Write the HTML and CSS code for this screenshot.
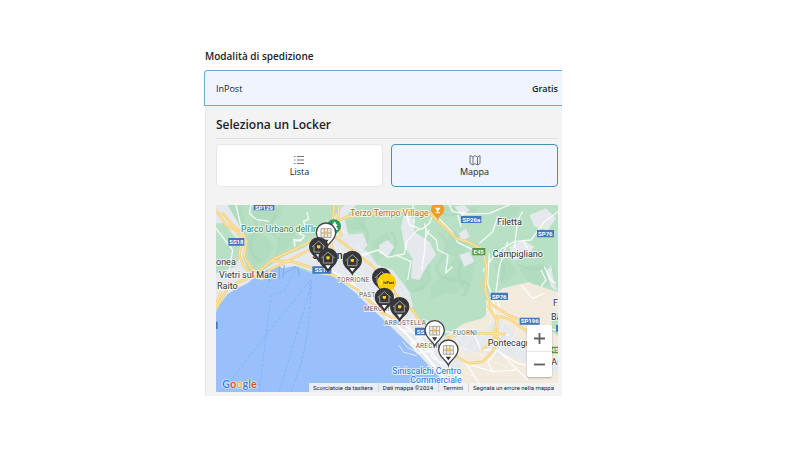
FILE: index.html
```html
<!DOCTYPE html>
<html lang="it">
<head>
<meta charset="utf-8">
<meta name="viewport" content="width=device-width, initial-scale=1">
<title>Modalità di spedizione</title>
<link rel="stylesheet" href="styles.css">
</head>
<body>
<main class="checkout">
  <h2 class="section-title">Modalità di spedizione</h2>
  <div class="method">
    <span>InPost</span>
    <strong class="price">Gratis</strong>
  </div>
  <section class="locker">
    <h1 class="locker-title">Seleziona un Locker</h1>
    <div class="modes">
      <button type="button" class="mode">
        <svg class="mode-icon" viewBox="0 0 12 12" aria-hidden="true"><path d="M3 2.500h7M3 6h7M3 9.500h7M0 2.500h1.500M0 6h1.500M0 9.500h1.500"/></svg>
        Lista
      </button>
      <button type="button" class="mode mode-active">
        <svg class="mode-icon" viewBox="0 0 12 12" aria-hidden="true"><path d="M1 1.500l3 1.500 2-1.500 2.500 1.500 2.500-1.500v8l-2.500 1.500-2.500-1.500-2 1.500-3-1.500zM4 3v8M8.500 3v8"/></svg>
        Mappa
      </button>
    </div>
    <div class="map">
      <svg class="map-canvas" viewBox="0 0 1026 561" preserveAspectRatio="xMidYMid slice" role="img" aria-label="Mappa dei locker">
        <defs>
          <path id="pin" d="M0 46C-4 31-29 22-29-1A29 29 0 0 1 29-1C29 22 4 31 0 46z"/>
          <g id="house">
            <use href="#pin" fill="#36373a"/>
            <path d="M-20 0L0-18 20 0M-14-4V15H14V-4" fill="none" stroke="#a39f98" stroke-width="3"/>
            <path d="M-5-5H5V2L0 5-5 2z" fill="#ffc926"/>
            <path d="M-8 22H8L0 33z" fill="#fff"/>
          </g>
          <g id="locker">
            <use href="#pin" fill="#fff" stroke="#45464a" stroke-width="4"/>
            <path d="M-15-13H15V13H-15zM-15 0H15M-5-13V13M5-13V13" fill="#f2efe9" stroke="#aaa398" stroke-width="3"/>
            <path d="M-5-5H5V4H-5z" fill="#f4c443"/>
            <path d="M-8 20H8L0 31z" fill="#333"/>
          </g>
        </defs>
        <rect class="land" width="1026" height="561"/>

        <!-- hills -->
        <g class="relief">
          <path d="M115 20l85-20-5 40-55 25zM85 95l50-15 40 45-30 45-45-10zM190 85l55-15-20 50-50 35zM390 50l65-25-10 50-50 5zM465 115l50-35 15 55-50 35zM555 55l45-30-5 60-40 25zM565 205l50-50 30 25-20 75-50 10zM645 240l60-50 45 45-50 55-55-5zM700 65l55 45-20 60-40-25zM640 5h150l-45 20-70-10zM830 180l45-15 30 35-40 40zM910 195l60-20 50 15-10 50-60 10z"/>
          <path d="M20 0l55 0 20 75-40-10zM95 150l40 20-20 20zM610 300l60-35 70 15-30 50-80 20zM735 10l60-10-25 35zM850 5h65l-20 45-40 5zM690 190l45-55 45 35-20 80z"/>
        </g>
        <g class="relief-line">
          <path d="M100 0q35 50 10 95t25 75M180 30q-35 45 10 75M430 55q40 20 15 80M525 80q30 30-5 75M600 90q-35 60 20 100t-30 70M665 80q50 35 10 85t45 60-20 75M745 160q-35 50 5 95l-20 55M830 155q50 15 25 75M905 180q50 20 80 5M660 20q50 25 95-10"/>
        </g>

        <!-- built-up areas -->
        <g class="urban">
          <path d="M0 0h35l40 70 20 40-15 45 15 40 45 15-20 25-75 25-30 30-15 15V205l60-20 20-60-55-70L0 55zM270 125l70-75 45-50h35l-35 40 15 60 60 45 25 35 45 15 50 65 15 60 35 45 40 10 50 15 100-10 25-15 45-5 30 25 70 25 65 45V561H710L560 400 370 225 240 183 130 205l70-50z"/>
          <path d="M555 65l12-50 30 35-2 30 45 30 20 40-25 30-25 45-25-5 5-60-25-35zM385 90l55-5 15 35-25 30-40-15zM490 120l25-15 20 20-20 30-25-10zM715 5l30-5 15 15-20 20zM730 85l20-15 10 25-25 15zM730 150l30-10 15 30-30 15zM880 125l40-20 35 20-25 30-35 10zM940 30l50-20 30 30-25 35-40-10zM915 240l30-10 10 50-25 25-15-30zM990 200l15-20 10 55 10 25-20-15z"/>
        </g>
        <path class="plain" d="M810 285l50-35 75-18 91 30V561H770l-45-45 15-55-60-90 55-35 65-10z"/>
        <path class="urban" d="M680 390l50-15 65 5 50-40 45 35 15 45 121 45v40l-70-15-55-35-60 0-50-15-40 5-30-35-40 10z"/>
        <path class="green" d="M617 355l-37-45 110-45 120 20 0 45-10 10-55 15-60 40-35-10zM1007 328l19-5v70l-19-15z"/>
        <path class="sea" d="M0 325l10-23 25-35 25-15 35-17 30-27 40-18 20-10 15 10 35-7 50 22 60 7 25 13 50 40 40 40 50 45 50 50 40 40 50 55 60 66H0z"/>
        <path class="harbor" d="M165 190l-5 40M190 183v40M205 180l-5 40M240 185l-35 20M245 185l5 30"/>

        <!-- local roads -->
        <g class="minor">
          <path d="M105 0l-5 25 20 18 40 6M237 125l-4-22 20 5 12-15-15-7 18-18-5-20 15-5-5-22M235 110l28-10M400 150l32 3 55-18 28 22 50-10 7-38 33-35 15-3 22-18 10-31 20-5M595 53l-4-53M625 55l8 25 28 25 5 30 30 15-7 55 20-20M640 75l-15 32M570 20l10 40 30 10M630 75l-5 70-8 50M700 0l10 20 45 7 65-2 60-25M670 42l35 35 20 35 45 22M725 30l10 35M790 115l40-35 15-45M800 200l35-50 25-20 35-20 50-5 40-55 41-30M875 110l-25 75-10 75 10 50M895 130l10-85 15-25M845 35l20 30M920 105l15 25-25 25M985 185l20 40 15 10M975 195l15 30-15 20M820 145l-5 90 15 45 10 75M915 240l35 40 35-15M830 300l65 40 55 25 76 10M685 380l60 5 55 0 80 5M740 370l35 20 20 45 45 0 65 40 90 20M750 475l80 25 70-5M740 460l50 75-10 26M830 500l-15-30 30-35 90 90M560 375l60 15 40 25-15 40 60 35 35 30M635 345l-20 55-30 15 20 30 50-10M385 215l120 100 110 85 80 105M490 290l80 65 70 90M540 150l45 20-10 55M0 70l50 65-10 60M60 0l15 65"/>
        </g>
        <g class="streets">
          <path d="M305 155l120 90M345 140l125 115M365 125l110 120M345 110l80 95M350 190l25-55M405 240l30-70M455 265l30-60M490 310l30-45M520 340l30-55M565 385l30-60M600 410l25-35M665 445l45-65M705 450l25-60M730 470l45-100M785 420l40-75M820 440l45-90M880 420l30-60M900 450l30-45M960 480l35-70M650 460l125 55M690 410l105 40 80 40M690 485l65-75M400 145l30 45M425 120l45 75M335 85l-10 60M330 45l60 40M790 390l120 35"/>
        </g>
        <path class="coast-road" d="M350 200l60 40 80 75 80 70 70 80 80 96"/>

        <!-- main roads -->
        <g class="road-edge">
          <path d="M0 15l30 45 35 20 12 30-8 40 15 35 30 30 25 8 25-30 60-30 70-35"/>
          <path d="M18 22l28 35 35 28 10 30-7 38 20 35 30 20M130 198l40-35 65-30 60-30M0 310l35-60 35-20 30-12M0 300l15-40M165 167l65 3 70 22 60 22 65 40 75 70 65 30M345 110l8 55-20 45M355 0l-5 40-10 50 10 45M370 0l-5 45 10 50"/>
          <path d="M350 90l45 35 65 50 60 60 30 50 40 30 25 40 45 18M340 60l50-23 60-12 65 0 55-10 70 10 50 45 30 30 35 10 45 25 12 50-5 70 15 40 55 35 75 35M848 335l-15 50 20 25M815 300l25 40 5 40-20 35-30 20M690 400l45-15 100 0 35 3M700 445l60 30 40-5 25-25 20-30M840 335q40 0 65 25l30 20"/>
        </g>
        <g class="road-core">
          <path d="M0 15l30 45 35 20 12 30-8 40 15 35 30 30 25 8 25-30 60-30 70-35"/>
          <path d="M18 22l28 35 35 28 10 30-7 38 20 35 30 20M130 198l40-35 65-30 60-30M0 310l35-60 35-20 30-12M0 300l15-40M165 167l65 3 70 22 60 22 65 40 75 70 65 30M345 110l8 55-20 45M355 0l-5 40-10 50 10 45M370 0l-5 45 10 50"/>
          <path d="M350 90l45 35 65 50 60 60 30 50 40 30 25 40 45 18M340 60l50-23 60-12 65 0 55-10 70 10 50 45 30 30 35 10 45 25 12 50-5 70 15 40 55 35 75 35M848 335l-15 50 20 25M815 300l25 40 5 40-20 35-30 20M690 400l45-15 100 0 35 3M700 445l60 30 40-5 25-25 20-30M840 335q40 0 65 25l30 20"/>
        </g>
        <path class="breakwater" d="M548 420l15 22 40 10M560 410l15 18 30 15"/>

        <!-- ferry routes -->
        <g class="ferry">
          <path d="M20 555L285 222M130 560L165 272l40-15 35-65M190 560L283 250v-25M225 560Q270 450 279 340L287 225"/>
        </g>

        <!-- road shields -->
        <g class="shield">
          <path d="M113-4h62V16h-62zM37 99h48v23H37zM289 184h57v22h-57zM735 33h61v21h-61zM963 75h51v22h-51zM824 263h52v22h-52zM911 338h60v21h-60zM597 368h58v23h-58zM0 350h5v22H0zM1020 360h6v20h-6z"/>
          <path class="shield-e" d="M769 129h39v22h-39zM1007 425h19v20h-19z"/>
        </g>
        <g class="shield-text">
          <text x="144" y="14">SP129</text><text x="61" y="117">SS18</text><text x="318" y="202">SS18</text>
          <text x="766" y="50">SP26a</text><text x="988" y="93">SP76</text><text x="850" y="281">SP76</text>
          <text x="941" y="355">SP196</text><text x="624" y="387">SS18</text><text x="788" y="147">E45</text><text x="1017" y="441">45</text>
        </g>

        <!-- place names -->
        <g class="place">
          <text x="0" y="179">onea</text><text x="9" y="220">Vietri sul Mare</text><text x="3" y="251">Raito</text>
          <text x="843" y="59">Filetta</text><text x="830" y="157">Campigliano</text>
          <text x="815" y="424">Pontecagnano</text><text x="1011" y="304">F</text><text x="1005" y="344">Ba</text><text x="1006" y="481">An</text>
          <text class="city" x="289" y="163">Salerno</text>
        </g>
        <g class="district">
          <text x="363" y="230">TORRIONE</text><text x="429" y="276">PASTENA</text><text x="444" y="317">MERCATELLO</text>
          <text x="505" y="359">ARBOSTELLA</text><text x="599" y="428">ARECHI</text><text x="711" y="390">FUORNI</text>
        </g>
        <g class="poi">
          <text class="park" x="75" y="81">Parco Urbano dell'Irno</text>
          <text class="food" x="403" y="33">Terzo Tempo Village</text>
          <text class="shop" x="529" y="508">Siniscalchi Centro</text><text class="shop" x="583" y="535">Commerciale</text>
        </g>

        <!-- pins -->
        <path d="M354 98q-2-10-12-17a21 21 0 1 1 24 0q-10 7-12 17z" fill="#269b5b"/>
        <path d="M356 49l-9 14h5l-7 11h9v7h4v-7h9l-7-11h5z" fill="#fff"/>
        <path d="M665 48q-2-12-11-18a20 20 0 1 1 22 0q-9 6-11 18z" fill="#f39a25"/>
        <path d="M656 8h18l-7 9v5h5v3h-14v-3h5v-5z" fill="#fff"/>
        <use href="#locker" x="330" y="84"/>
        <use href="#house" x="308" y="126"/>
        <use href="#house" x="336" y="159"/>
        <use href="#house" x="409" y="167"/>
        <use href="#house" x="497" y="218"/>
        <circle cx="512" cy="232" r="28" fill="#ffcd00"/>
        <text class="brand" x="518" y="236">InPost</text>
        <path d="M492 223q10 8 0 16" fill="none" stroke="#fff" stroke-width="3"/>
        <use href="#house" x="505" y="278"/>
        <use href="#house" x="551" y="306"/>
        <use href="#locker" x="656" y="377"/>
        <use href="#locker" x="697" y="435"/>
      </svg>
      <a class="google" href="#" aria-label="Google"><span class="g-blue">G</span><span class="g-red">o</span><span class="g-yellow">o</span><span class="g-blue">g</span><span class="g-green">l</span><span class="g-red">e</span></a>
      <div class="zoom">
        <button type="button" class="zoom-button" aria-label="Zoom avanti"><svg viewBox="0 0 12 12"><path d="M6 0v12M0 6h12"/></svg></button>
        <button type="button" class="zoom-button" aria-label="Zoom indietro"><svg viewBox="0 0 12 12"><path d="M0 6h12"/></svg></button>
      </div>
      <div class="credits">
        <button type="button" class="credit">Scorciatoie da tastiera</button>
        <span class="credit">Dati mappa ©2024</span>
        <a class="credit" href="#">Termini</a>
        <a class="credit" href="#">Segnala un errore nella mappa</a>
      </div>
    </div>
  </section>
</main>
</body>
</html>
```
FILE: styles.css
```css
* { box-sizing: border-box; }

body {
  margin: 0;
  background: #fff;
  color: #222326;
  font: 9px/12px "Open Sans", "Noto Sans", sans-serif;
}

button, a {
  color: inherit;
  font: inherit;
  text-decoration: none;
}

.checkout { padding: 50px 238px 54px 204px; }

.section-title {
  margin: 0 1px 8px;
  font-size: 10px;
  line-height: 12px;
  font-weight: 600;
}

.method {
  display: flex;
  align-items: center;
  justify-content: space-between;
  height: 36px;
  padding: 1px 4px 0 11px;
  background: #eff4ff;
  border: 1px solid #72a8cc;
  border-right: 0;
  border-radius: 4px 0 0 0;
}

.price { font-weight: 600; }

.locker {
  margin-left: 1px;
  padding: 10px 4px 4px 10px;
  background: #f3f3f3;
  border-left: 1px solid #e8e8e8;
}

.locker-title {
  margin: 0 0 5px;
  padding-bottom: 4px;
  border-bottom: 1px solid #dedede;
  font-size: 12px;
  line-height: 18px;
  font-weight: 600;
}

.modes {
  display: grid;
  grid-template-columns: 1fr 1fr;
  gap: 8px;
  margin-bottom: 18px;
}

.mode {
  display: flex;
  flex-direction: column;
  align-items: center;
  justify-content: center;
  height: 43px;
  padding: 0;
  background: #fff;
  border: 1px solid #e6e6e6;
  border-radius: 4px;
}

.mode-active {
  background: #eff4ff;
  border-color: #468fb8;
}

.mode-icon {
  width: 12px;
  height: 12px;
  fill: none;
  stroke: #70757a;
  stroke-width: 1;
}

.map {
  position: relative;
  aspect-ratio: 342 / 187;
  overflow: hidden;
  font-family: Roboto, sans-serif;
}

.map-canvas { display: block; width: 100%; height: 100%; }

.land, .green { fill: #b8e0c5; }
.relief { fill: #a5d6b6; opacity: .3; }
.relief-line { fill: none; stroke: #92c5a5; stroke-width: 8; opacity: .2; }
.urban { fill: #e5e9ed; }
.plain { fill: #f2eadd; }
.sea { fill: #99c0fa; }
.harbor { fill: none; stroke: #7ba9ed; stroke-width: 3; }
.minor { fill: none; stroke: #fff; stroke-width: 4; stroke-linejoin: round; opacity: .85; }
.coast-road { fill: none; stroke: #fff; stroke-width: 6; }
.streets { fill: none; stroke: #fff; stroke-width: 3; opacity: .4; }
.road-edge path { fill: none; stroke: #f5cf78; stroke-width: 8; stroke-linejoin: round; }
.road-core path { fill: none; stroke: #ffeaae; stroke-width: 3; stroke-linejoin: round; }
.breakwater { fill: none; stroke: #e5e9ed; stroke-width: 3; }
.ferry { fill: none; stroke: #709df0; stroke-width: 2; stroke-dasharray: 10 5; opacity: .7; }

.shield { fill: #4278bd; }
.shield-e { fill: #579645; }
.shield-text { fill: #fff; font-size: 18px; font-weight: 700; text-anchor: middle; }

.place, .district, .poi {
  stroke: #fff;
  stroke-width: 6px;
  stroke-opacity: .7;
  stroke-linejoin: round;
  paint-order: stroke;
}

.place { fill: #333; font-size: 27px; }
.city { fill: #222; font-size: 32px; font-weight: 500; }
.district { fill: #5f656a; font-size: 19px; letter-spacing: 1px; }
.poi { font-size: 26px; }
.park { fill: #38805c; }
.food { fill: #c86c18; }
.shop { fill: #1675dc; }
.brand { fill: #222; font-size: 11px; font-weight: 700; text-anchor: middle; }

.google {
  position: absolute;
  left: 6px;
  bottom: 0;
  font: 700 11px/16px Lato, "Open Sans", sans-serif;
  text-shadow: 0 0 1px #fff, 0 0 1px #fff, 0 0 2px #fff;
}

.g-blue { color: #3f7de8; }
.g-red { color: #e54437; }
.g-yellow { color: #f2b511; }
.g-green { color: #33a354; }

.zoom {
  position: absolute;
  right: 6px;
  bottom: 15px;
  width: 25px;
  background: #fff;
  border-radius: 2px;
  box-shadow: 0 1px 2px #0004;
}

.zoom-button {
  display: grid;
  place-items: center;
  width: 100%;
  height: 26px;
  padding: 0;
  background: none;
  border: 0;
}

.zoom-button + .zoom-button { border-top: 1px solid #e5e5e5; }
.zoom-button svg { width: 11px; height: 11px; stroke: #606060; stroke-width: 2; }

.credits {
  position: absolute;
  right: 0;
  bottom: 0;
  display: flex;
  gap: 1px;
  height: 9px;
  background: #f4f5f6dd;
  color: #222;
  font-size: 6px;
  line-height: 9px;
}

.credit {
  padding: 0 4px;
  background: none;
  border: 0;
  white-space: nowrap;
}

.credit + .credit { border-left: 1px solid #d5d7da; }
```
